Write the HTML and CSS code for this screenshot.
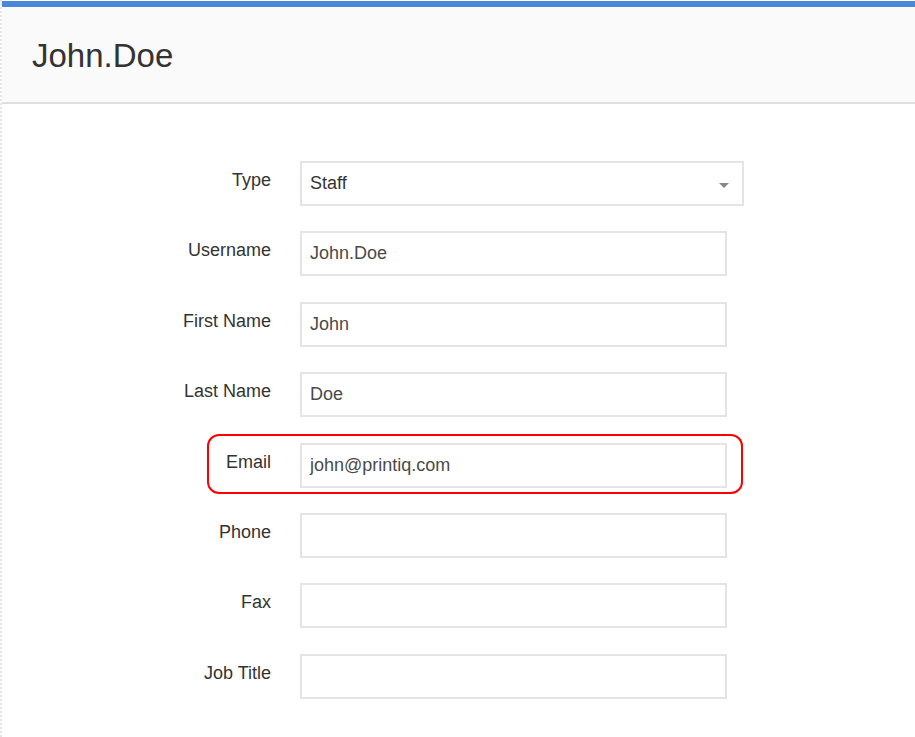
FILE: index.html
```html
<!DOCTYPE html>
<html>
<head>
<meta charset="utf-8">
<link rel="stylesheet" href="styles.css">
</head>
<body>
<div class="page">
  <div class="topbar"></div>
  <header class="header"><h1 class="title">John.Doe</h1></header>
  <main class="form">
    <div class="row">
      <label class="label">Type</label>
      <div class="field select">Staff<span class="caret"></span></div>
    </div>
    <div class="row">
      <label class="label">Username</label>
      <div class="field">John.Doe</div>
    </div>
    <div class="row">
      <label class="label">First Name</label>
      <div class="field">John</div>
    </div>
    <div class="row">
      <label class="label">Last Name</label>
      <div class="field">Doe</div>
    </div>
    <div class="row highlight-row">
      <span class="highlight"></span>
      <label class="label">Email</label>
      <div class="field">john@printiq.com</div>
    </div>
    <div class="row">
      <label class="label">Phone</label>
      <div class="field"></div>
    </div>
    <div class="row">
      <label class="label">Fax</label>
      <div class="field"></div>
    </div>
    <div class="row">
      <label class="label">Job Title</label>
      <div class="field"></div>
    </div>
  </main>
</div>
</body>
</html>
```

FILE: styles.css
```css
html, body {
  margin: 0;
  padding: 0;
  background: #ffffff;
}
body {
  font-family: "Liberation Sans", Arial, sans-serif;
  color: #333333;
}
.page {
  width: 915px;
  height: 737px;
  overflow: hidden;
  box-sizing: border-box;
  border-left: 2px dotted #e4e4e4;
}
.topbar {
  height: 6px;
  margin-top: 1px;
  background: #4a86d9;
}
.header {
  height: 95px;
  background: #fafafa;
  border-bottom: 2px solid #dedede;
  display: flex;
  align-items: center;
  padding-left: 30px;
}
.title {
  margin: 0;
  font-weight: normal;
  font-size: 33px;
  color: #333333;
  padding-top: 3px;
}
.form {
  padding-top: 57px;
  display: flex;
  flex-direction: column;
  gap: 25.4px;
}
.row {
  display: flex;
  align-items: center;
  height: 45px;
  position: relative;
}
.label {
  width: 269px;
  flex: none;
  text-align: right;
  font-size: 18px;
  color: #333333;
  margin-top: -6px;
}
.field {
  box-sizing: border-box;
  margin-left: 29px;
  width: 427px;
  height: 45px;
  border: 2px solid #e4e4e4;
  padding: 0 0 0 8px;
  display: flex;
  align-items: center;
  font-size: 18px;
  color: #4a4a4a;
  background: #ffffff;
  position: relative;
  z-index: 1;
}
.select {
  width: 444px;
  color: #333333;
}
.caret {
  position: absolute;
  right: 13px;
  top: 20px;
  width: 0;
  height: 0;
  border-left: 5px solid transparent;
  border-right: 5px solid transparent;
  border-top: 5px solid #888888;
}
.highlight {
  position: absolute;
  left: 205px;
  top: -9px;
  width: 536px;
  height: 60px;
  box-sizing: border-box;
  border: 2px solid #ff0000;
  border-radius: 12px;
}
```
